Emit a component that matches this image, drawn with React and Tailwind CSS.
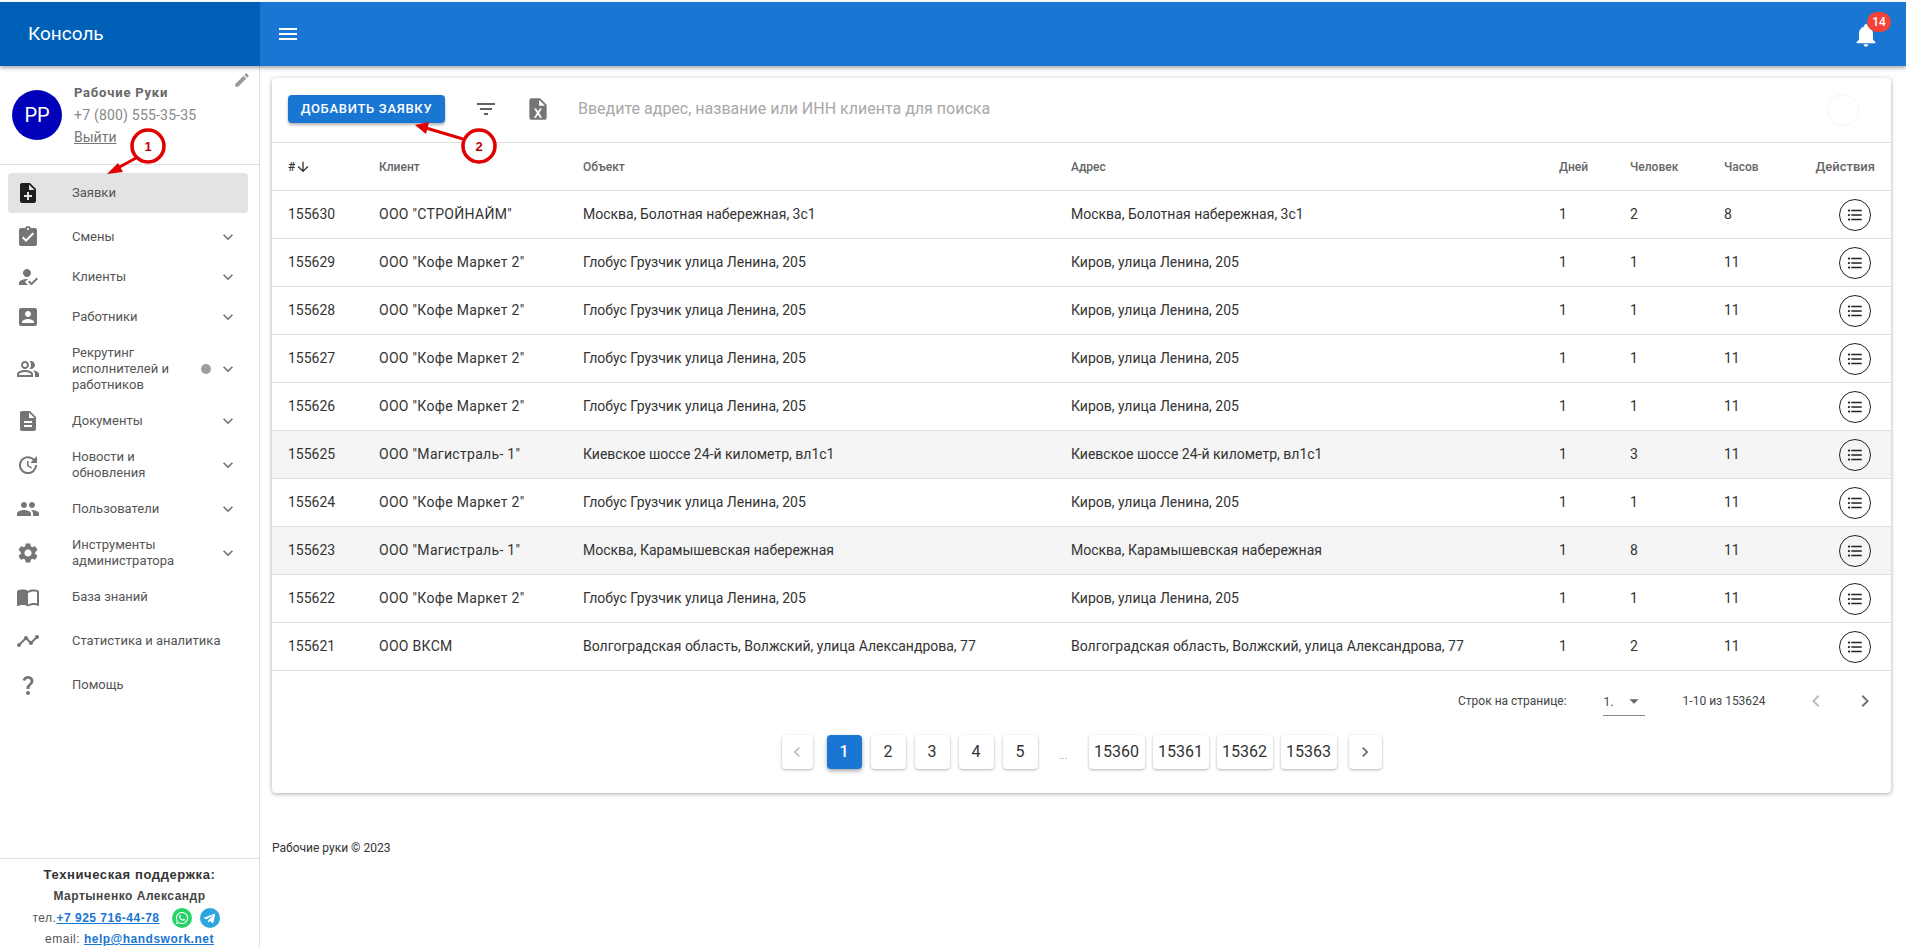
import React from 'react';
import { FaWhatsapp, FaTelegramPlane } from 'react-icons/fa';

const P = {
  noteAdd: 'M14 2H6c-1.1 0-1.99.9-1.99 2L4 20c0 1.1.89 2 1.99 2H18c1.1 0 2-.9 2-2V8l-6-6zm2 14h-3v3h-2v-3H8v-2h3v-3h2v3h3v2zm-3-7V3.5L18.5 9H13z',
  turnedIn: 'M19 3h-4.18C14.4 1.84 13.3 1 12 1c-1.3 0-2.4.84-2.82 2H5c-1.1 0-2 .9-2 2v14c0 1.1.9 2 2 2h14c1.1 0 2-.9 2-2V5c0-1.1-.9-2-2-2zm-7 0c.55 0 1 .45 1 1s-.45 1-1 1-1-.45-1-1 .45-1 1-1zm-2 14l-4-4 1.41-1.41L10 14.17l6.59-6.59L18 9l-8 8z',
  howToReg: 'M9 17l3-2.94c-.39-.04-.68-.06-1-.06-2.67 0-8 1.34-8 4v2h9l-3-3zm2-5c2.21 0 4-1.79 4-4s-1.79-4-4-4-4 1.79-4 4 1.79 4 4 4zM15.47 20.5L12 17l1.4-1.41 2.07 2.08 5.13-5.17 1.4 1.41z',
  accountBox: 'M3 5v14c0 1.1.89 2 2 2h14c1.1 0 2-.9 2-2V5c0-1.1-.9-2-2-2H5c-1.11 0-2 .9-2 2zm12 4c0 1.66-1.34 3-3 3s-3-1.34-3-3 1.34-3 3-3 3 1.34 3 3zm-9 8c0-2 4-3.1 6-3.1s6 1.1 6 3.1v1H6v-1z',
  peopleAlt: 'M16.67 13.13C18.04 14.06 19 15.32 19 17v3h4v-3c0-2.18-3.57-3.47-6.33-3.87zM15 12c2.21 0 4-1.79 4-4s-1.79-4-4-4c-.47 0-.91.1-1.33.24C14.5 5.27 15 6.58 15 8s-.5 2.73-1.33 3.76c.42.14.86.24 1.33.24zM9 12c2.21 0 4-1.79 4-4s-1.79-4-4-4-4 1.79-4 4 1.79 4 4 4zm0-6c1.1 0 2 .9 2 2s-.9 2-2 2-2-.9-2-2 .9-2 2-2zM9 13c-2.67 0-8 1.34-8 4v3h16v-3c0-2.66-5.33-4-8-4zm6 5H3v-.99C3.2 16.29 6.3 15 9 15s5.8 1.29 6 2v1z',
  description: 'M14 2H6c-1.1 0-1.99.9-1.99 2L4 20c0 1.1.89 2 1.99 2H18c1.1 0 2-.9 2-2V8l-6-6zm2 16H8v-2h8v2zm0-4H8v-2h8v2zm-3-5V3.5L18.5 9H13z',
  update: 'M21 10.12h-6.78l2.74-2.82c-2.73-2.7-7.15-2.8-9.88-.1-2.73 2.71-2.73 7.08 0 9.79s7.15 2.71 9.88 0C18.32 15.65 19 14.08 19 12.1h2c0 1.98-.88 4.55-2.64 6.29-3.51 3.48-9.21 3.48-12.72 0-3.5-3.47-3.53-9.11-.02-12.58s9.14-3.47 12.65 0L21 3v7.12zM12.5 8v4.25l3.5 2.08-.72 1.21L11 13V8h1.5z',
  people: 'M16 11c1.66 0 2.99-1.34 2.99-3S17.66 5 16 5c-1.66 0-3 1.34-3 3s1.34 3 3 3zm-8 0c1.66 0 2.99-1.34 2.99-3S9.66 5 8 5C6.34 5 5 6.34 5 8s1.34 3 3 3zm0 2c-2.33 0-7 1.17-7 3.5V19h14v-2.5c0-2.33-4.67-3.5-7-3.5zm8 0c-.29 0-.62.02-.97.05 1.16.84 1.97 1.97 1.97 3.45V19h6v-2.5c0-2.33-4.67-3.5-7-3.5z',
  settings: 'M19.14 12.94c.04-.3.06-.61.06-.94 0-.32-.02-.64-.07-.94l2.03-1.58c.18-.14.23-.41.12-.61l-1.92-3.32c-.12-.22-.37-.29-.59-.22l-2.39.96c-.5-.38-1.03-.7-1.62-.94l-.36-2.54c-.04-.24-.24-.41-.48-.41h-3.84c-.24 0-.43.17-.47.41l-.36 2.54c-.59.24-1.13.57-1.62.94l-2.39-.96c-.22-.08-.47 0-.59.22L2.74 8.87c-.12.21-.08.47.12.61l2.03 1.58c-.05.3-.09.63-.09.94s.02.64.07.94l-2.03 1.58c-.18.14-.23.41-.12.61l1.92 3.32c.12.22.37.29.59.22l2.39-.96c.5.38 1.03.7 1.62.94l.36 2.54c.05.24.24.41.48.41h3.84c.24 0 .44-.17.47-.41l.36-2.54c.59-.24 1.13-.56 1.62-.94l2.39.96c.22.08.47 0 .59-.22l1.92-3.32c.12-.22.07-.47-.12-.61l-2.01-1.58zM12 15.6c-1.98 0-3.6-1.62-3.6-3.6s1.62-3.6 3.6-3.6 3.6 1.62 3.6 3.6-1.62 3.6-3.6 3.6z',
  menuBook: 'M21 5c-1.11-.35-2.33-.5-3.5-.5-1.95 0-4.05.4-5.5 1.5-1.45-1.1-3.55-1.5-5.5-1.5S2.45 4.9 1 6v14.65c0 .25.25.5.5.5.1 0 .15-.05.25-.05C3.1 20.45 5.05 20 6.5 20c1.95 0 4.05.4 5.5 1.5 1.35-.85 3.8-1.5 5.5-1.5 1.65 0 3.35.3 4.75 1.05.1.05.15.05.25.05.25 0 .5-.25.5-.5V6c-.6-.45-1.25-.75-2-1zm0 13.5c-1.1-.35-2.3-.5-3.5-.5-1.7 0-4.15.65-5.5 1.5V8c1.35-.85 3.8-1.5 5.5-1.5 1.2 0 2.4.15 3.5.5v11.5z',
  timeline: 'M23 8c0 1.1-.9 2-2 2-.18 0-.35-.02-.51-.07l-3.56 3.55c.05.16.07.34.07.52 0 1.1-.9 2-2 2s-2-.9-2-2c0-.18.02-.36.07-.52l-2.55-2.55c-.16.05-.34.07-.52.07s-.36-.02-.52-.07l-4.55 4.56c.05.16.07.33.07.51 0 1.1-.9 2-2 2s-2-.9-2-2 .9-2 2-2c.18 0 .35.02.51.07l4.56-4.55C8.02 9.36 8 9.18 8 9c0-1.1.9-2 2-2s2 .9 2 2c0 .18-.02.36-.07.52l2.55 2.55c.16-.05.34-.07.52-.07s.36.02.52.07l3.55-3.56C19.02 8.35 19 8.18 19 8c0-1.1.9-2 2-2s2 .9 2 2z',
  question: 'M11.07 12.85c.77-1.39 2.25-2.21 3.11-3.44.91-1.29.4-3.7-2.18-3.7-1.69 0-2.52 1.28-2.87 2.34L6.54 6.96C7.25 4.83 9.18 3 11.99 3c2.35 0 3.96 1.07 4.78 2.41.7 1.15 1.11 3.3.03 4.9-1.2 1.77-2.35 2.31-2.97 3.45-.25.46-.35.76-.35 2.24h-2.89c-.01-.78-.13-2.05.48-3.15zM14 20c0 1.1-.9 2-2 2s-2-.9-2-2 .9-2 2-2 2 .9 2 2z',
  expand: 'M16.59 8.59L12 13.17 7.41 8.59 6 10l6 6 6-6z',
  edit: 'M3 17.25V21h3.75L17.81 9.94l-3.75-3.75L3 17.25zM20.71 7.04c.39-.39.39-1.02 0-1.41l-2.34-2.34a.9959.9959 0 00-1.41 0l-1.83 1.83 3.75 3.75 1.83-1.83z',
  menu: 'M3 18h18v-2H3v2zm0-5h18v-2H3v2zm0-7v2h18V6H3z',
  bell: 'M12 22c1.1 0 2-.9 2-2h-4c0 1.1.89 2 2 2zm6-6v-5c0-3.07-1.64-5.64-4.5-6.32V4c0-.83-.67-1.5-1.5-1.5s-1.5.67-1.5 1.5v.68C7.63 5.36 6 7.92 6 11v5l-2 2v1h16v-1l-2-2z',
  filter: 'M10 18h4v-2h-4v2zM3 6v2h18V6H3zm3 7h12v-2H6v2z',
  arrowDown: 'M20 12l-1.41-1.41L13 16.17V4h-2v12.17l-5.58-5.59L4 12l8 8 8-8z',
  list: 'M4 10.5c-.83 0-1.5.67-1.5 1.5s.67 1.5 1.5 1.5 1.5-.67 1.5-1.5-.67-1.5-1.5-1.5zm0-6c-.83 0-1.5.67-1.5 1.5S3.17 7.5 4 7.5 5.5 6.83 5.5 6 4.83 4.5 4 4.5zm0 12c-.83 0-1.5.68-1.5 1.5s.68 1.5 1.5 1.5 1.5-.68 1.5-1.5-.67-1.5-1.5-1.5zM7 19h14v-2H7v2zm0-6h14v-2H7v2zm0-8v2h14V5H7z',
  left: 'M15.41 7.41L14 6l-6 6 6 6 1.41-1.41L10.83 12z',
  right: 'M10 6L8.59 7.41 13.17 12l-4.58 4.59L10 18l6-6z',
  dropDown: 'M7 10l5 5 5-5z',
  fileX: 'M14 2H6C4.9 2 4 2.9 4 4v16c0 1.1.9 2 2 2h12c1.1 0 2-.9 2-2V8l-6-6zm-1 7V3.5L18.5 9H13zM8.3 11.5h2l1.7 2.9 1.7-2.9h2l-2.7 4.2 2.8 4.3h-2L12 17l-1.8 3h-2l2.8-4.3-2.7-4.2z',
};

const Icon = ({ d, size = 24, className = '' }) => (
  <svg viewBox="0 0 24 24" width={size} height={size} fill="currentColor" fillRule="evenodd" className={className}>
    <path d={d} />
  </svg>
);

const menuItems = [
  { label: 'Заявки', icon: P.noteAdd, active: true },
  { label: 'Смены', icon: P.turnedIn, more: true },
  { label: 'Клиенты', icon: P.howToReg, more: true },
  { label: 'Работники', icon: P.accountBox, more: true },
  { label: 'Рекрутинг исполнителей и работников', icon: P.peopleAlt, more: true, dot: true },
  { label: 'Документы', icon: P.description, more: true },
  { label: 'Новости и обновления', icon: P.update, more: true },
  { label: 'Пользователи', icon: P.people, more: true },
  { label: 'Инструменты администратора', icon: P.settings, more: true },
  { label: 'База знаний', icon: P.menuBook },
  { label: 'Статистика и аналитика', icon: P.timeline },
  { label: 'Помощь', icon: P.question },
];

const kofe = { client: 'ООО "Кофе Маркет 2"', object: 'Глобус Грузчик улица Ленина, 205', address: 'Киров, улица Ленина, 205', days: 1, people: 1, hours: 11 };

const rows = [
  { id: 155630, client: 'ООО "СТРОЙНАЙМ"', object: 'Москва, Болотная набережная, 3с1', address: 'Москва, Болотная набережная, 3с1', days: 1, people: 2, hours: 8 },
  { id: 155629, ...kofe },
  { id: 155628, ...kofe },
  { id: 155627, ...kofe },
  { id: 155626, ...kofe },
  { id: 155625, client: 'ООО "Магистраль- 1"', object: 'Киевское шоссе 24-й километр, вл1с1', address: 'Киевское шоссе 24-й километр, вл1с1', days: 1, people: 3, hours: 11, shaded: true },
  { id: 155624, ...kofe },
  { id: 155623, client: 'ООО "Магистраль- 1"', object: 'Москва, Карамышевская набережная', address: 'Москва, Карамышевская набережная', days: 1, people: 8, hours: 11, shaded: true },
  { id: 155622, ...kofe },
  { id: 155621, client: 'ООО ВКСМ', object: 'Волгоградская область, Волжский, улица Александрова, 77', address: 'Волгоградская область, Волжский, улица Александрова, 77', days: 1, people: 2, hours: 11 },
];

const pageBtn = 'h-[34px] flex items-center justify-center rounded bg-white text-[16px] text-[#333] shadow-[0_1px_3px_rgba(0,0,0,0.3)]';
const gridCols = 'grid grid-cols-[91px_204px_488px_488px_71px_94px_60px_1fr] items-center px-4';

function Sidebar() {
  return (
    <aside className="w-[260px] shrink-0 border-r border-[#e0e0e0] bg-white flex flex-col">
      <div className="relative h-[99px] border-b border-[#e0e0e0] flex pl-3 pt-6">
        <div className="w-[50px] h-[50px] rounded-full bg-[#0000b8] text-white text-[20px] flex items-center justify-center">PP</div>
        <div className="ml-3 mt-[-7px]">
          <div className="text-[13px] leading-[20px] font-bold tracking-[0.8px] text-[#666]">Рабочие Руки</div>
          <div className="text-[14px] leading-[22px] mt-[1px] tracking-[0.2px] text-[#888]">+7 (800) 555-35-35</div>
          <div className="text-[14px] leading-[22px] text-[#777] underline">Выйти</div>
        </div>
        <Icon d={P.edit} size={18} className="absolute right-[8px] top-[5px] text-[#999]" />
      </div>

      <nav className="pt-2 flex-1">
        {menuItems.map((item) => (
          <div
            key={item.label}
            className={`ml-2 mr-[11px] pl-2 pr-2 flex items-center rounded ${item.more ? 'min-h-10 py-2' : 'h-10 mb-1'} ${item.active ? 'bg-[#e3e3e3]' : ''}`}
          >
            <Icon d={item.icon} className={`w-6 shrink-0 ${item.active ? 'text-[#1f1f1f]' : 'text-[#757575]'}`} />
            <span className={`ml-8 text-[13px] leading-4 text-[#555] ${item.more ? 'w-[132px]' : 'w-[160px]'}`}>{item.label}</span>
            {item.dot && <span className="w-[10px] h-[10px] rounded-full bg-[#9e9e9e] ml-[-3px] mr-[1px]" />}
            {item.more && <Icon d={P.expand} size={20} className="ml-auto mr-[2px] text-[#757575]" />}
          </div>
        ))}
      </nav>

      <div className="h-[89px] shrink-0 overflow-hidden border-t border-[#e0e0e0] text-center text-[#333] font-['Liberation_Sans',sans-serif]">
        <div className="mt-[7px] text-[13px] leading-[18px] font-bold tracking-[0.6px]">Техническая поддержка:</div>
        <div className="mt-[3px] text-[12px] leading-[18px] font-bold tracking-[0.5px] text-[#444]">Мартыненко Александр</div>
        <div className="flex items-center justify-center mt-[1px] h-6 text-[12px] tracking-[0.5px] text-[#555] pr-[7px]">
          <span>тел.</span>
          <span className="text-[#1976d2] underline font-bold">+7 925 716-44-78</span>
          <span className="ml-3 w-5 h-5 rounded-full bg-[#25d366] text-white flex items-center justify-center"><FaWhatsapp size={14} /></span>
          <span className="ml-2 w-5 h-5 rounded-full bg-[#2ca5e0] text-white flex items-center justify-center"><FaTelegramPlane size={13} /></span>
        </div>
        <div className="mt-[1px] text-[12px] leading-[16px] tracking-[0.5px] text-[#555]">
          email: <span className="text-[#1976d2] underline font-bold">help@handswork.net</span>
        </div>
      </div>
    </aside>
  );
}

function Toolbar() {
  return (
    <div className="h-[65px] flex items-center pl-4 pr-[32px] border-b border-[#e0e0e0]">
      <button className="w-[157px] h-[28px] rounded bg-[#1976d2] text-white text-[13px] font-medium tracking-[0.7px] uppercase shadow-[0_2px_3px_rgba(0,0,0,0.3)] mt-[-3px]">
        Добавить заявку
      </button>
      <Icon d={P.filter} className="ml-[29px] text-[#616161] mt-[-3px]" />
      <Icon d={P.fileX} size={26} className="ml-[27px] text-[#757575] mt-[-3px]" />
      <span className="ml-[27px] text-[16px] text-[#a8a8a8] mt-[-2px]">Введите адрес, название или ИНН клиента для поиска</span>
      <span className="ml-auto w-8 h-8 rounded-full border border-[#f5f5f5]" />
    </div>
  );
}

function OrdersTable() {
  return (
    <div>
      <div className={`${gridCols} h-12 border-b border-[#e0e0e0] text-[12px] font-medium text-[#666]`}>
        <div className="flex items-center text-[#333]">#<Icon d={P.arrowDown} size={16} className="text-[#333]" /></div>
        <div>Клиент</div>
        <div>Объект</div>
        <div>Адрес</div>
        <div>Дней</div>
        <div>Человек</div>
        <div>Часов</div>
        <div className="text-right text-[13px]">Действия</div>
      </div>
      {rows.map((row) => (
        <div key={row.id} className={`${gridCols} h-12 border-b border-[#e0e0e0] text-[14px] text-[#333] ${row.shaded ? 'bg-[#f5f5f5]' : ''}`}>
          <div>{row.id}</div>
          <div className="tracking-[0.3px]">{row.client}</div>
          <div>{row.object}</div>
          <div>{row.address}</div>
          <div>{row.days}</div>
          <div>{row.people}</div>
          <div>{row.hours}</div>
          <div className="flex justify-end pr-1">
            <span className="w-8 h-8 rounded-full border border-[#222] flex items-center justify-center">
              <Icon d={P.list} size={18} className="text-[#222]" />
            </span>
          </div>
        </div>
      ))}
    </div>
  );
}

function Pagination() {
  return (
    <div>
      <div className="h-[58px] flex items-center text-[12px] text-[#444]">
        <span className="ml-[1186px] mt-[2px]">Строк на странице:</span>
        <div className="ml-[36px] w-[42px] h-[28px] mt-[4px] border-b border-[#888] flex items-center justify-between pl-[1px] relative">
          <span>1.</span>
          <Icon d={P.dropDown} size={22} className="absolute right-0 top-[2px] text-[#666]" />
        </div>
        <span className="ml-[38px] mt-[2px]">1-10 из 153624</span>
        <Icon d={P.left} size={24} className="ml-[38px] text-[#bdbdbd] mt-[2px]" />
        <Icon d={P.right} size={24} className="ml-[25px] text-[#757575] mt-[2px]" />
      </div>
      <div className="h-[64px] pt-[6px] flex items-start justify-center">
        <button className={`${pageBtn} w-[31px] text-[#bdbdbd]`}><Icon d={P.left} size={20} /></button>
        <button className="ml-[14px] w-[35px] h-[34px] rounded bg-[#1976d2] text-white text-[16px] font-medium shadow-[0_2px_4px_rgba(0,0,0,0.35)]">1</button>
        {[2, 3, 4, 5].map((n) => (
          <button key={n} className={`${pageBtn} ml-[9px] w-[35px]`}>{n}</button>
        ))}
        <span className="w-[51px] text-center text-[11px] text-[#aaa] pt-[13px]">...</span>
        {[15360, 15361, 15362, 15363].map((n, i) => (
          <button key={n} className={`${pageBtn} w-[56px] ${i ? 'ml-2' : ''}`}>{n}</button>
        ))}
        <button className={`${pageBtn} ml-3 w-[33px] text-[#666]`}><Icon d={P.right} size={20} /></button>
      </div>
    </div>
  );
}

export default function App() {
  return (
    <div className="relative h-screen overflow-hidden pt-[2px] bg-white font-['Roboto',sans-serif]">
      <header className="relative z-10 h-16 flex shadow-[0_2px_4px_rgba(0,0,0,0.35)]">
        <div className="w-[260px] bg-[#0060b8] text-white text-[19px] flex items-center pl-7">Консоль</div>
        <div className="flex-1 bg-[#1976d2] text-white flex items-center pl-[16px] pr-[28px] justify-between">
          <Icon d={P.menu} />
          <div className="relative mt-[2px] mr-[-2px]">
            <Icon d={P.bell} size={28} />
            <span className="absolute left-[15px] top-[-9px] w-[24px] h-[20px] rounded-full bg-[#f44336] text-[12px] font-medium flex items-center justify-center">14</span>
          </div>
        </div>
      </header>

      <div className="flex h-[881px]">
        <Sidebar />
        <main className="flex-1 pt-3 pl-3 pr-[15px]">
          <div className="rounded bg-white shadow-[0_1px_4px_rgba(0,0,0,0.35)]">
            <Toolbar />
            <OrdersTable />
            <Pagination />
          </div>
          <div className="mt-[46px] text-[12px] text-[#333]">Рабочие руки © 2023</div>
        </main>
      </div>

      {/* callouts drawn over the screenshot */}
      <svg className="absolute inset-0 w-full h-full pointer-events-none z-20">
        <line x1="136" y1="158" x2="116" y2="169" stroke="#e00000" strokeWidth="3" />
        <polygon points="107,174 118,163 123,172" fill="#e00000" />
        <circle cx="148" cy="146" r="16" fill="#fff" stroke="#e00000" strokeWidth="3.5" />
        <text x="148" y="151" textAnchor="middle" fontSize="13" fontWeight="700" fill="#c00000" fontFamily="Liberation Sans, sans-serif">1</text>
        <line x1="463" y1="139" x2="426" y2="128" stroke="#e00000" strokeWidth="3" />
        <polygon points="415,125 429,122 426,134" fill="#e00000" />
        <circle cx="479" cy="146" r="16" fill="#fff" stroke="#e00000" strokeWidth="3.5" />
        <text x="479" y="151" textAnchor="middle" fontSize="13" fontWeight="700" fill="#c00000" fontFamily="Liberation Sans, sans-serif">2</text>
      </svg>
    </div>
  );
}
